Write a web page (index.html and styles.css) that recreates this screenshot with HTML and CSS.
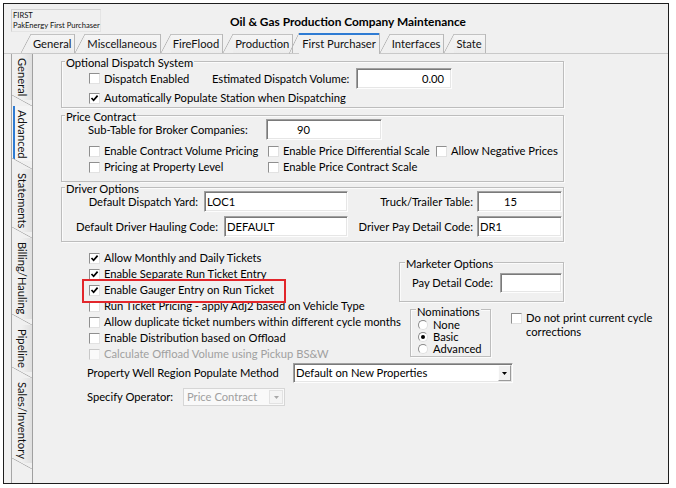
FILE: index.html
```html
<!DOCTYPE html>
<html>
<head>
<meta charset="utf-8">
<title>Oil &amp; Gas Production Company Maintenance</title>
<link rel="stylesheet" href="styles.css">
</head>
<body>
<div class="window">
  <header class="titlebar">
    <div class="app-id"><span>FIRST</span><span>PakEnergy First Purchaser</span></div>
    <h1 class="title">Oil &amp; Gas Production Company Maintenance</h1>
  </header>
  <nav class="tabs">
    <span class="tab">General</span>
    <span class="tab">Miscellaneous</span>
    <span class="tab">FireFlood</span>
    <span class="tab">Production</span>
    <span class="tab active">First Purchaser</span>
    <span class="tab">Interfaces</span>
    <span class="tab">State</span>
  </nav>
  <div class="body">
    <nav class="vtabs">
      <span class="vtab">General</span>
      <span class="vtab active">Advanced</span>
      <span class="vtab">Statements</span>
      <span class="vtab">Billing/Hauling</span>
      <span class="vtab">Pipeline</span>
      <span class="vtab">Sales/Inventory</span>
    </nav>
    <main class="panel">
      <section class="group g-dispatch">
        <div class="group-title">Optional Dispatch System</div>
        <div class="row r-dispatch">
          <label class="check w-dispatch"><span class="box"></span>Dispatch Enabled</label>
          <span class="lbl w-est">Estimated Dispatch Volume:</span>
          <span class="field f-vol">0.00</span>
        </div>
        <div class="row r-auto">
          <label class="check"><span class="box on"><svg viewBox="0 0 9 9" width="9" height="9"><path d="M1.5 4 L3.6 6.3 L7.6 1.6" fill="none" stroke="#000" stroke-width="1.7"/></svg></span>Automatically Populate Station when Dispatching</label>
        </div>
      </section>

      <section class="group g-price">
        <div class="group-title">Price Contract</div>
        <div class="row r-sub">
          <span class="lbl w-sub">Sub-Table for Broker Companies:</span>
          <span class="field f-sub">90</span>
        </div>
        <div class="row r-grid">
          <label class="check"><span class="box"></span>Enable Contract Volume Pricing</label>
          <label class="check"><span class="box"></span>Enable Price Differential Scale</label>
          <label class="check"><span class="box"></span>Allow Negative Prices</label>
        </div>
        <div class="row r-grid">
          <label class="check"><span class="box"></span>Pricing at Property Level</label>
          <label class="check"><span class="box"></span>Enable Price Contract Scale</label>
        </div>
      </section>

      <section class="group g-driver">
        <div class="group-title">Driver Options</div>
        <div class="row r-driver r-d1">
          <span class="lbl">Default Dispatch Yard:</span>
          <span class="field f-yard">LOC1</span>
          <span class="lbl lbl2">Truck/Trailer Table:</span>
          <span class="field f-truck">15</span>
        </div>
        <div class="row r-driver r-d2">
          <span class="lbl">Default Driver Hauling Code:</span>
          <span class="field f-haul">DEFAULT</span>
          <span class="lbl lbl2">Driver Pay Detail Code:</span>
          <span class="field f-pay">DR1</span>
        </div>
      </section>

      <div class="lower">
        <div class="list">
          <label class="check item"><span class="box on"><svg viewBox="0 0 9 9" width="9" height="9"><path d="M1.5 4 L3.6 6.3 L7.6 1.6" fill="none" stroke="#000" stroke-width="1.7"/></svg></span>Allow Monthly and Daily Tickets</label>
          <label class="check item"><span class="box on"><svg viewBox="0 0 9 9" width="9" height="9"><path d="M1.5 4 L3.6 6.3 L7.6 1.6" fill="none" stroke="#000" stroke-width="1.7"/></svg></span>Enable Separate Run Ticket Entry</label>
          <label class="check item highlight"><span class="box on"><svg viewBox="0 0 9 9" width="9" height="9"><path d="M1.5 4 L3.6 6.3 L7.6 1.6" fill="none" stroke="#000" stroke-width="1.7"/></svg></span>Enable Gauger Entry on Run Ticket</label>
          <label class="check item"><span class="box"></span>Run Ticket Pricing - apply Adj2 based on Vehicle Type</label>
          <label class="check item"><span class="box"></span>Allow duplicate ticket numbers within different cycle months</label>
          <label class="check item"><span class="box"></span>Enable Distribution based on Offload</label>
          <label class="check item disabled"><span class="box"></span>Calculate Offload Volume using Pickup BS&amp;W</label>
        </div>
        <div class="side">
          <section class="group g-marketer">
            <div class="group-title">Marketer Options</div>
            <div class="row r-mkt">
              <span class="lbl grow">Pay Detail Code:</span>
              <span class="field f-mkt"></span>
            </div>
          </section>
          <div class="side-row">
            <section class="group g-nom">
              <div class="group-title">Nominations</div>
              <label class="radio"><span class="dot"></span>None</label>
              <label class="radio"><span class="dot on"></span>Basic</label>
              <label class="radio"><span class="dot"></span>Advanced</label>
            </section>
            <label class="check wrap"><span class="box"></span><span class="wrap-text">Do not print current cycle corrections</span></label>
          </div>
        </div>
      </div>

      <div class="row sel-row s1">
        <span class="lbl w-prop">Property Well Region Populate Method</span>
        <span class="select s-prop"><span class="sel-text">Default on New Properties</span><span class="sel-btn"><svg viewBox="0 0 5 3" width="5" height="3"><path d="M0 0h5l-2.5 3z" fill="#000"/></svg></span></span>
      </div>
      <div class="row sel-row s2">
        <span class="lbl w-op">Specify Operator:</span>
        <span class="select s-op disabled"><span class="sel-text">Price Contract</span><span class="sel-btn"><svg viewBox="0 0 5 3" width="5" height="3"><path d="M0 0h5l-2.5 3z" fill="#a8a8a8"/></svg></span></span>
      </div>
    </main>
  </div>
</div>
</body>
</html>
```

FILE: styles.css
```css
* { box-sizing: border-box; }

body {
  margin: 0;
  background: #fff;
  font-family: Lato, "Noto Sans", sans-serif;
  font-size: 11.2px;
  line-height: 14px;
  color: #000;
}

.window {
  width: 666px;
  height: 481px;
  margin: 3px 0 0 3px;
  border: 1px solid #1e1e1e;
  background: #f0f0f0;
  display: flex;
  flex-direction: column;
}

/* ---------- title bar ---------- */
.titlebar {
  height: 29px;
  display: flex;
  align-items: flex-start;
  flex-shrink: 0;
}

.app-id {
  width: 90px;
  height: 23px;
  margin: 5px 0 0 7px;
  border: 1px solid #d2d2d2;
  border-right-color: #e4e4e4;
  border-bottom-color: #e4e4e4;
  padding-left: 1px;
  display: flex;
  flex-direction: column;
  font-size: 7.6px;
  line-height: 10px;
  white-space: nowrap;
  color: #111;
}

.title {
  margin: 10px 0 0 129px;
  font-size: 11.9px;
  line-height: 16px;
  font-weight: bold;
  white-space: nowrap;
}

/* ---------- horizontal tabs ---------- */
.tabs {
  height: 21px;
  padding-left: 17px;
  display: flex;
  align-items: flex-end;
  border-bottom: 1px solid #c9c9c9;
  flex-shrink: 0;
}

.tab {
  height: 19px;
  padding: 0 3px 0 12px;
  line-height: 19px;
  border-right: 1px solid #b8b8b8;
  white-space: nowrap;
  background:
    linear-gradient(to bottom right, transparent calc(50% - 0.7px), #b3b3b3 50%, transparent calc(50% + 0.7px)) left top / 10px 100% no-repeat,
    linear-gradient(#c2c2c2, #c2c2c2) right top / calc(100% - 10px) 1px no-repeat,
    linear-gradient(to bottom, #f6f6f6, #ececec) right top / calc(100% - 10px) 100% no-repeat;
  color: #111;
}

.tab.active {
  height: 21px;
  margin-bottom: -1px;
  margin-left: -4px;
  line-height: 21px;
  padding-bottom: 2px;
  padding-left: 13px;
  background:
    linear-gradient(to bottom right, transparent calc(50% - 0.7px), #b3b3b3 50%, transparent calc(50% + 0.7px)) left top / 10px 100% no-repeat,
    linear-gradient(#2e7bd3, #2e7bd3) right top / calc(100% - 10px) 2px no-repeat,
    linear-gradient(#f0f0f0, #f0f0f0) right top / calc(100% - 10px) 100% no-repeat;
}

/* ---------- body ---------- */
.body {
  flex: 1;
  display: flex;
  min-height: 0;
}

.vtabs {
  width: 21px;
  margin-left: 7px;
  border-left: 1px solid #a6a6a6;
  display: flex;
  flex-direction: column;
  flex-shrink: 0;
}

.vtab {
  writing-mode: vertical-rl;
  line-height: 20px;
  padding: 4px 0 10px;
  white-space: nowrap;
  color: #111;
  background:
    linear-gradient(to top right, transparent calc(50% - 0.7px), #b0b0b0 50%, transparent calc(50% + 0.7px)) left bottom / 100% 11px no-repeat,
    linear-gradient(to right, rgba(0,0,0,0) 45%, rgba(0,0,0,0.07)) left top / 100% calc(100% - 6px) no-repeat;
}

.vtab.active {
  background:
    linear-gradient(to top right, transparent calc(50% - 0.7px), #b0b0b0 50%, transparent calc(50% + 0.7px)) left bottom / 100% 11px no-repeat,
    linear-gradient(#2e7bd3, #2e7bd3) 1px top / 2px calc(100% - 10px) no-repeat,
    linear-gradient(#f4f4f4, #f4f4f4) left top / 100% calc(100% - 8px) no-repeat;
}

.panel {
  flex: 1;
  border-left: 1px solid #a0a0a0;
  padding-left: 28px;
}

/* ---------- group boxes ---------- */
.group {
  border: 1px solid #bdbdbd;
  box-shadow: inset 1px 1px 0 #fbfbfb, 1px 1px 0 #fbfbfb;
}

.group-title {
  width: fit-content;
  margin: -6px 0 0 3px;
  padding: 0 1px;
  line-height: 14px;
  height: 14px;
  background: #f0f0f0;
  white-space: nowrap;
}

.g-dispatch, .g-price, .g-driver { width: 503px; }
.g-dispatch { margin-top: 7px; padding-bottom: 1px; }
.g-price { margin-top: 7px; padding-bottom: 6px; }
.g-driver { margin-top: 5px; padding-bottom: 4px; }

.row {
  display: flex;
  align-items: center;
}

.lbl { white-space: nowrap; }

.r-dispatch { margin-top: -2px; height: 21px; padding-left: 27px; }
.r-auto { margin-top: 1px; height: 16px; padding-left: 27px; }

.w-dispatch { width: 123px; }
.w-est { width: 144px; }

.r-sub { margin-top: -5px; height: 21px; padding-left: 26px; }
.w-sub { width: 178px; }

.r-grid {
  display: grid;
  grid-template-columns: 179px 168px auto;
  align-items: center;
  height: 16px;
  padding-left: 27px;
}
.r-sub + .r-grid { margin-top: 3px; }

.r-driver {
  justify-content: flex-end;
  height: 21px;
  padding-right: 1px;
}
.r-d1 { margin-top: -5px; }
.r-d2 { margin-top: 4px; }
.r-driver .lbl { margin-right: 6px; }
.r-driver .lbl2 { width: 125px; text-align: right; margin-right: 4px; }

/* ---------- fields ---------- */
.field {
  height: 21px;
  background: #fff;
  border: 1px solid;
  border-color: #a0a0a0 #fdfdfd #fdfdfd #a0a0a0;
  box-shadow: inset 1px 1px 0 #7a7a7a, inset -1px -1px 0 #e6e6e6;
  padding: 0 2px;
  line-height: 19px;
  white-space: nowrap;
}

.f-vol { width: 96px; text-align: right; padding-right: 7px; }
.f-sub { width: 116px; padding-left: 30px; }
.f-yard { width: 144px; }
.f-haul { width: 124px; }
.f-truck { width: 85px; padding-left: 26px; }
.f-pay { width: 85px; }
.f-mkt { width: 62px; height: 20px; }

/* ---------- check boxes ---------- */
.check {
  display: flex;
  align-items: center;
  white-space: nowrap;
}

.box {
  width: 11px;
  height: 11px;
  margin-right: 4px;
  flex-shrink: 0;
  background: #fff;
  border: 1px solid;
  border-color: #8f8f8f #e2e2e2 #e2e2e2 #8f8f8f;
  display: flex;
  align-items: center;
  justify-content: center;
}

.box svg { display: block; }

.check.disabled { color: #a0a0a0; }
.check.disabled .box { border-color: #c8c8c8 #ececec #ececec #c8c8c8; background: #fafafa; }

/* ---------- lower area ---------- */
.lower {
  display: flex;
}

.list {
  width: 338px;
  margin-top: 8px;
  padding-left: 28px;
  display: flex;
  flex-direction: column;
}

.item { height: 16px; }

.highlight { position: relative; }
.highlight::after {
  content: "";
  position: absolute;
  left: -7px;
  top: -3px;
  width: 200px;
  height: 20px;
  border: 2px solid #e2262b;
}

.side {
  display: flex;
  flex-direction: column;
}

.g-marketer {
  width: 165px;
  margin-top: 20px;
  padding-bottom: 8px;
}
.g-marketer .group-title { margin-left: 5px; }

.r-mkt {
  margin-top: 2px;
  height: 20px;
  padding: 0 1px 0 12px;
}
.grow { flex: 1; }

.side-row {
  display: flex;
  align-items: flex-start;
  margin-top: 7px;
}

.g-nom {
  width: 81px;
  margin-left: 11px;
  padding: 1px 0 1px 7px;
}
.g-nom .group-title { margin-left: -2px; margin-bottom: 0; }

.radio {
  display: flex;
  align-items: center;
  height: 12px;
  line-height: 12px;
  white-space: nowrap;
}

.dot {
  width: 10px;
  height: 10px;
  margin-right: 5px;
  border-radius: 50%;
  background: #fff;
  border: 1px solid;
  border-color: #8a8a8a #e0e0e0 #e0e0e0 #8a8a8a;
  display: flex;
  align-items: center;
  justify-content: center;
}
.dot.on::before {
  content: "";
  width: 4px;
  height: 4px;
  border-radius: 50%;
  background: #000;
}

.check.wrap {
  margin: 2px 0 0 20px;
  align-items: flex-start;
  white-space: normal;
}
.check.wrap .box { margin-top: 2px; }
.wrap-text { width: 132px; line-height: 14px; }

/* ---------- selects ---------- */
.sel-row { padding-left: 26px; }
.s1 { margin-top: 1px; height: 20px; }
.s2 { margin-top: 5px; height: 18px; }
.w-prop { width: 206px; }
.w-op { width: 96px; }

.select {
  display: flex;
  align-items: stretch;
  height: 100%;
  background: #fff;
  border: 1px solid;
  border-color: #a0a0a0 #fdfdfd #fdfdfd #a0a0a0;
  box-shadow: inset 1px 1px 0 #7a7a7a, inset -1px -1px 0 #e6e6e6;
  padding: 1px;
}
.s-prop { width: 220px; }
.s-op { width: 102px; }

.sel-text {
  flex: 1;
  padding-left: 1px;
  line-height: 16px;
  white-space: nowrap;
  overflow: hidden;
}

.sel-btn {
  width: 13px;
  background: #f0f0f0;
  border: 1px solid;
  border-color: #fdfdfd #9a9a9a #9a9a9a #fdfdfd;
  display: flex;
  align-items: center;
  justify-content: center;
}

.select.disabled {
  background: #f9f9f9;
  border-color: #d6d6d6;
  box-shadow: none;
  color: #a0a0a0;
}
.select.disabled .sel-text { line-height: 14px; padding-left: 2px; }
.select.disabled .sel-btn { border-color: #e2e2e2; background: #f4f4f4; width: 14px; }
```
